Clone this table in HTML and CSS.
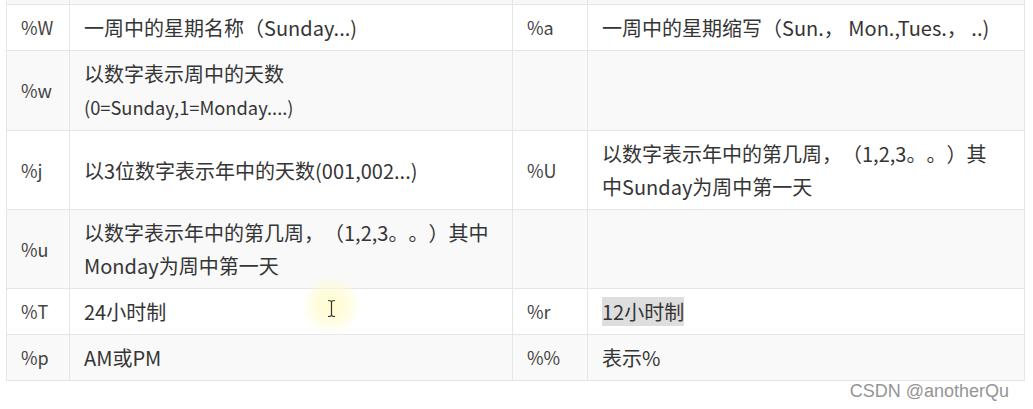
FILE: index.html
```html
<!DOCTYPE html>
<html lang="zh-CN">
<head>
<meta charset="utf-8">
<title>时间格式</title>
<link rel="stylesheet" href="styles.css">
</head>
<body>
<div class="page">
  <table class="fmt">
    <colgroup>
      <col class="c-code"><col class="c-desc"><col class="c-code2"><col class="c-desc2">
    </colgroup>
    <tbody>
      <tr class="cut"><td></td><td></td><td></td><td></td></tr>
      <tr class="odd">
        <td class="code">%W</td>
        <td>一周中的星期名称（Sunday...)</td>
        <td class="code">%a</td>
        <td class="last">一周中的星期缩写（Sun.， Mon.,Tues.， ..)</td>
      </tr>
      <tr class="even">
        <td class="code">%w</td>
        <td>以数字表示周中的天数<br><span class="small">(0=Sunday,1=Monday....)</span></td>
        <td class="code"></td>
        <td class="last"></td>
      </tr>
      <tr class="odd">
        <td class="code">%j</td>
        <td>以3位数字表示年中的天数(001,002...)</td>
        <td class="code">%U</td>
        <td class="last">以数字表示年中的第几周，（1,2,3。。）其中Sunday为周中第一天</td>
      </tr>
      <tr class="even">
        <td class="code">%u</td>
        <td>以数字表示年中的第几周，（1,2,3。。）其中Monday为周中第一天</td>
        <td class="code"></td>
        <td class="last"></td>
      </tr>
      <tr class="odd">
        <td class="code">%T</td>
        <td>24小时制</td>
        <td class="code">%r</td>
        <td class="last"><span class="sel">12小时制</span></td>
      </tr>
      <tr class="even">
        <td class="code">%p</td>
        <td>AM或PM</td>
        <td class="code">%%</td>
        <td class="last">表示%</td>
      </tr>
    </tbody>
  </table>
  <div class="watermark">CSDN @anotherQu</div>
  <div class="halo"></div>
  <svg class="ibeam" width="9" height="19" viewBox="0 0 9 19">
    <path d="M1 1.5 Q4.5 1.5 4.5 3 Q4.5 1.5 8 1.5 M4.5 3 V16 M1 17.5 Q4.5 17.5 4.5 16 Q4.5 17.5 8 17.5" fill="none" stroke="#333" stroke-width="1.2"/>
  </svg>
</div>
</body>
</html>
```

FILE: styles.css
```css
html, body {
  margin: 0;
  padding: 0;
  background: #ffffff;
}

.page {
  position: relative;
  width: 1033px;
  height: 409px;
  overflow: hidden;
  padding-left: 6px;
  box-sizing: border-box;
}

.fmt {
  border-collapse: collapse;
  table-layout: fixed;
  width: 1019px;
  font-family: "Noto Sans CJK SC", "Noto Sans", sans-serif;
  font-size: 20px;
  line-height: 33px;
  color: #353535;
  text-spacing-trim: space-all;
}

.c-code { width: 63px; }
.c-desc { width: 443px; }
.c-code2 { width: 75px; }
.c-desc2 { width: 437px; }

.fmt td {
  border: 1px solid #e6e6e6;
  padding: 6px 14px;
  vertical-align: middle;
}

.fmt td.last {
  padding-right: 20px;
}

.fmt .cut td {
  padding: 0;
  height: 4px;
  border-top: none;
  background: #f8f8f8;
}

.fmt .odd td { background: #ffffff; }
.fmt .even td { background: #f9f9f9; }

.fmt td.code {
  font-size: 18px;
  color: #444444;
}

.small { font-size: 18.3px; }

.sel {
  background: #dedede;
}

.watermark {
  position: absolute;
  right: 24px;
  top: 381px;
  font-family: "Liberation Sans", Arial, sans-serif;
  font-size: 18px;
  color: #959595;
  line-height: 20px;
}

.halo {
  position: absolute;
  left: 302px;
  top: 276px;
  width: 58px;
  height: 58px;
  border-radius: 50%;
  background: radial-gradient(circle, rgba(255, 250, 195, 0.8) 0%, rgba(255, 251, 205, 0.55) 45%, rgba(255, 255, 235, 0) 72%);
}

.ibeam {
  position: absolute;
  left: 327px;
  top: 299px;
}
```
